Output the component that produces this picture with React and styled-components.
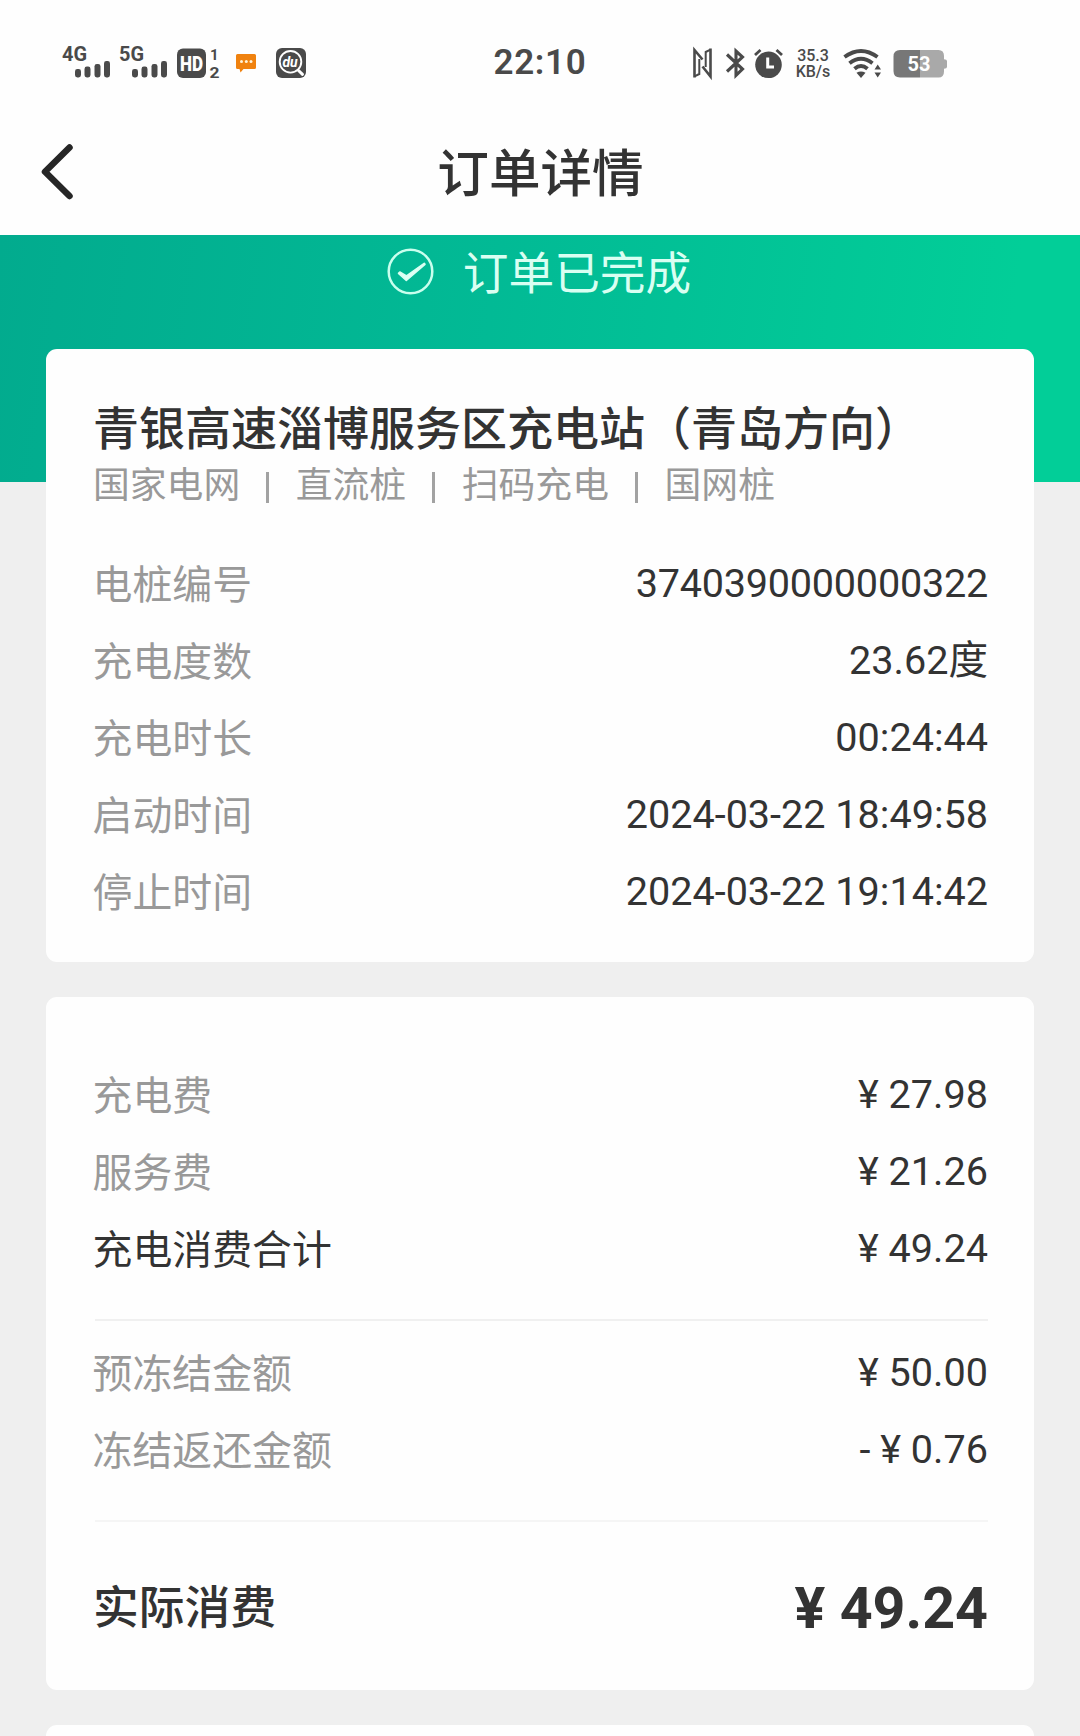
import React from "react";
import styled, { createGlobalStyle } from "styled-components";

const GlobalStyle = createGlobalStyle`
  * { box-sizing: border-box; }
  html, body { margin: 0; padding: 0; background: #efefef; }
  body { font-family: Roboto, "Noto Sans CJK SC", sans-serif; color: #333; }
  svg { display: block; flex: none; }
`;

const Screen = styled.div`
  width: 1080px;
  height: 1736px;
  overflow: hidden;
  background: #efefef;
`;

const StatusBar = styled.div`
  height: 126px;
  background: #fefefe;
  display: grid;
  grid-template-columns: 1fr auto 1fr;
  align-items: center;
`;

const StatusGroup = styled.div`
  display: flex;
  align-items: center;
  height: 32px;
  padding: 0 133px 0 62px;
  justify-content: ${(p) => (p.$end ? "flex-end" : "flex-start")};
`;

const Glyph = styled.svg`
  margin-left: ${(p) => p.$gap || 0}px;
  overflow: visible;
  font-family: Roboto, sans-serif;
  font-weight: 700;
`;

const Clock = styled.div`
  font-size: 35px;
  line-height: 40px;
  font-weight: 600;
  letter-spacing: 0.7px;
  color: #4a4a4a;
`;

const NetSpeed = styled.div`
  width: 36px;
  margin-left: 11px;
  padding: 1px 0 0 2px;
  display: flex;
  flex-direction: column;
  align-items: center;
  font-size: 16px;
  line-height: 16px;
  font-weight: 500;
  color: #4a4a4a;
  white-space: nowrap;
`;

const NavBar = styled.header`
  height: 109px;
  background: #fefefe;
  display: grid;
  grid-template-columns: 120px 1fr 120px;
  align-items: center;
  padding-bottom: 17px;
`;

const BackButton = styled.button`
  border: 0;
  background: none;
  padding: 0 0 0 40px;
  height: 60px;
`;

const NavTitle = styled.h1`
  margin: 0;
  padding: 6px 0 0 1px;
  text-align: center;
  font-size: 51.6px;
  line-height: 60px;
  font-weight: 500;
`;

const Banner = styled.div`
  height: 247px;
  background: linear-gradient(98deg, #02ab8e 0%, #02ba95 45%, #02ce98 92%);
  display: flex;
  justify-content: center;
  padding-top: 5px;
`;

const BannerStatus = styled.div`
  display: flex;
  align-items: center;
  height: 62px;
  gap: 29px;
  padding-right: 2px;
  color: #d9fff2;
  font-size: 45.7px;
  line-height: 62px;
  font-weight: 400;
`;

const BannerText = styled.span`
  padding-top: 8px;
`;

const Cards = styled.main`
  margin: -133px 46px 0;
  display: flex;
  flex-direction: column;
  gap: 35px;
`;

const Card = styled.section`
  background: #fefefe;
  border-radius: 11px;
  height: ${(p) => p.$h}px;
  padding: ${(p) => p.$top}px 46px 0 47px;
`;

const StationName = styled.h2`
  margin: 0;
  font-size: 46px;
  line-height: 60px;
  font-weight: 500;
  white-space: nowrap;
`;

const Tags = styled.div`
  display: flex;
  align-items: center;
  height: 54px;
  margin-bottom: 32px;
  font-size: 36.8px;
  line-height: 54px;
  color: #999;
`;

const TagDivider = styled.i`
  width: 3px;
  height: 31px;
  margin: 2px 26.6px 0 26px;
  background: #a2a2a2;
`;

const Row = styled.div`
  display: flex;
  justify-content: space-between;
  height: 77.1px;
  line-height: 77px;
  font-size: 39.6px;
  white-space: nowrap;
`;

const Label = styled.span`
  padding-top: ${(p) => p.$drop || 2}px;
  margin-left: -0.5px;
  font-size: 39.9px;
  color: ${(p) => (p.$strong ? "#333" : "#999")};
`;

const Value = styled.span`
  color: #333;
  letter-spacing: ${(p) => (p.$tight ? "-0.22px" : "normal")};
`;

const Divider = styled.hr`
  border: 0;
  height: 2px;
  margin: 32px 0 ${(p) => p.$after}px 2px;
  background: ${(p) => p.$color || "#f0f0f0"};
`;

const TotalRow = styled.div`
  display: flex;
  justify-content: space-between;
  line-height: 84px;
  white-space: nowrap;
`;

const TotalLabel = styled.span`
  font-size: 45.8px;
  font-weight: 500;
`;

const TotalValue = styled.span`
  font-size: 57.4px;
  font-weight: 700;
`;

const INK = "#4a4a4a";

const Signal = ({ label, gap }) => (
  <Glyph $gap={gap} width="48" height="32" viewBox="0 0 48 32" fill={INK}>
    <text x="0" y="14" fontSize="20" textLength="25" lengthAdjust="spacingAndGlyphs">{label}</text>
    <rect x="13" y="22" width="6" height="8.500" rx="2.4" />
    <rect x="22.5" y="19.500" width="6" height="11" rx="2.4" />
    <rect x="32.5" y="17" width="6" height="13.5" rx="2.4" />
    <rect x="42" y="14" width="6" height="16.5" rx="2.4" />
  </Glyph>
);

const HdBadge = () => (
  <Glyph $gap={10} width="43" height="32" viewBox="0 0 43 32" fill={INK}>
    <rect x="0" y="1.500" width="29" height="29.500" rx="6" />
    <text x="3" y="23.500" fontSize="19.500" fontWeight="900" fill="#fff" textLength="23" lengthAdjust="spacingAndGlyphs">HD</text>
    <text x="33" y="13" fontSize="15">1</text>
    <text x="32.500" y="30.700" fontSize="15" textLength="10" lengthAdjust="spacingAndGlyphs">2</text>
  </Glyph>
);

const ChatIcon = () => (
  <Glyph $gap={16} width="20" height="32" viewBox="0 0 20 32">
    <path d="M1.500 7h17q1.500 0 1.500 1.500v12q0 1.500-1.500 1.500H7.500L4.500 25.500 3.500 22H1.500Q0 22 0 20.500v-12Q0 7 1.500 7z" fill="#f0820f" />
    <g fill="#fff3d8"><circle cx="5.500" cy="14.500" r="1.500" /><circle cx="10.300" cy="14.500" r="1.500" /><circle cx="15" cy="14.500" r="1.500" /></g>
  </Glyph>
);

const DuIcon = () => (
  <Glyph $gap={20} width="30" height="32" viewBox="0 0 30 32">
    <rect x="0" y="1" width="30" height="30" rx="6" fill={INK} />
    <circle cx="14.500" cy="14.800" r="10.800" fill="none" stroke="#fff" strokeWidth="1.900" />
    <path d="M22.500 23.500l4 3.800" stroke="#fff" strokeWidth="3" strokeLinecap="round" />
    <text x="6.400" y="19.800" fontSize="14" fontStyle="italic" fill="#fff">du</text>
  </Glyph>
);

const NfcIcon = () => (
  <Glyph width="19" height="32" viewBox="0 0 19 32" fill="none" stroke={INK} strokeWidth="2.600">
    <path d="M1.500 30.500V3L9.500 12.500" />
    <path d="M1.500 29.300L6.300 27V12" strokeWidth="2" />
    <path d="M17.500 1.500V29.500L9.500 19.500" />
    <path d="M17.500 2.700L12.700 5V20" strokeWidth="2" />
  </Glyph>
);

const BluetoothIcon = () => (
  <Glyph $gap={14} width="19" height="32" viewBox="0 0 19 32" fill="none" stroke={INK} strokeWidth="3.100">
    <path d="M1 7.500L16.500 22 10 28.300V4L16.500 10 1 24.500" />
  </Glyph>
);

const AlarmIcon = () => (
  <Glyph $gap={9} width="29" height="32" viewBox="0 0 29 32">
    <circle cx="14.500" cy="17.800" r="13.300" fill={INK} />
    <path d="M1 8L6.500 3M28 8L22.500 3" stroke={INK} strokeWidth="2.800" />
    <path d="M13.700 10.500v9.500H20" fill="none" stroke="#fff" strokeWidth="3" />
  </Glyph>
);

const WifiIcon = () => (
  <Glyph $gap={13} width="38" height="32" viewBox="0 0 38 32" fill="none" stroke={INK} strokeWidth="3.900">
    <path d="M1.500 10Q18 -2 34.500 10M6.500 16.200Q18 7.200 29.500 16.200M11.500 21.700Q18 16.200 24.500 21.700" />
    <path d="M13.500 25.800Q18 23 22.500 25.800L18 31z" fill={INK} stroke="none" />
    <path d="M31.500 22.500L34.700 17.500 38 22.500zM31.500 25.500L34.700 30.500 38 25.500z" fill={INK} stroke="none" />
  </Glyph>
);

const Battery = () => (
  <Glyph $gap={12} width="54" height="32" viewBox="0 0 54 32">
    <path d="M7 3H27V30.500H7Q0.500 30.500 0.500 24V9.500Q0.500 3 7 3z" fill="#777" />
    <path d="M27 3H45.500Q51 3 51 9V12.200Q54 12.500 54 14V20Q54 21.500 51 21.800V24.500Q51 30.500 45.500 30.500H27z" fill="#a9a9a9" />
    <text x="26" y="24" fontSize="20" textAnchor="middle" fill="#fff">53</text>
  </Glyph>
);

const DoneIcon = () => (
  <svg width="47" height="47" viewBox="0 0 47 47" fill="none">
    <circle cx="23.500" cy="23.500" r="21.800" stroke="#c9ffee" strokeWidth="2.500" />
    <path d="M11.500 25.300L19.300 32.400 38 16.300 37.200 15.300 19.500 28 12.800 24z" fill="#e2fff6" stroke="#d9fff2" strokeWidth="1.600" strokeLinejoin="round" />
  </svg>
);

const details = [
  ["电桩编号", "3740390000000322"],
  ["充电度数", "23.62度"],
  ["充电时长", "00:24:44"],
  ["启动时间", "2024-03-22 18:49:58"],
  ["停止时间", "2024-03-22 19:14:42"],
];

const fees = [
  ["充电费", "¥ 27.98"],
  ["服务费", "¥ 21.26"],
  ["充电消费合计", "¥ 49.24", true],
];

const frozen = [
  ["预冻结金额", "¥ 50.00"],
  ["冻结返还金额", "- ¥ 0.76"],
];

const tags = ["国家电网", "直流桩", "扫码充电", "国网桩"];

const Rows = ({ items }) =>
  items.map(([label, value, strong]) => (
    <Row key={label}>
      <Label $strong={strong}>{label}</Label>
      <Value $tight={value.length === 16}>{value}</Value>
    </Row>
  ));

export default function App() {
  return (
    <Screen>
      <GlobalStyle />
      <StatusBar>
        <StatusGroup>
          <Signal label="4G" />
          <Signal label="5G" gap={9} />
          <HdBadge />
          <ChatIcon />
          <DuIcon />
        </StatusGroup>
        <Clock>22:10</Clock>
        <StatusGroup $end>
          <NfcIcon />
          <BluetoothIcon />
          <AlarmIcon />
          <NetSpeed>
            <span>35.3</span>
            <span>KB/s</span>
          </NetSpeed>
          <WifiIcon />
          <Battery />
        </StatusGroup>
      </StatusBar>
      <NavBar>
        <BackButton aria-label="返回">
          <svg width="36" height="60" viewBox="0 0 36 60" fill="none">
            <path d="M29.500 5.500L5 29.800 29.500 54" stroke="#262626" strokeWidth="6.500" strokeLinecap="round" strokeLinejoin="round" />
          </svg>
        </BackButton>
        <NavTitle>订单详情</NavTitle>
      </NavBar>
      <Banner>
        <BannerStatus>
          <DoneIcon />
          <BannerText>订单已完成</BannerText>
        </BannerStatus>
      </Banner>
      <Cards>
        <Card $h={613} $top={50}>
          <StationName>青银高速淄博服务区充电站（青岛方向）</StationName>
          <Tags>
            {tags.map((tag, i) => (
              <React.Fragment key={tag}>
                {i > 0 && <TagDivider />}
                <span>{tag}</span>
              </React.Fragment>
            ))}
          </Tags>
          <Rows items={details} />
        </Card>
        <Card $h={693} $top={59}>
          <Rows items={fees} />
          <Divider $after={13} />
          <Rows items={frozen} />
          <Divider $after={45} $color="#f5f5f5" />
          <TotalRow>
            <TotalLabel>实际消费</TotalLabel>
            <TotalValue>¥ 49.24</TotalValue>
          </TotalRow>
        </Card>
        <Card $h={60} $top={0} />
      </Cards>
    </Screen>
  );
}
